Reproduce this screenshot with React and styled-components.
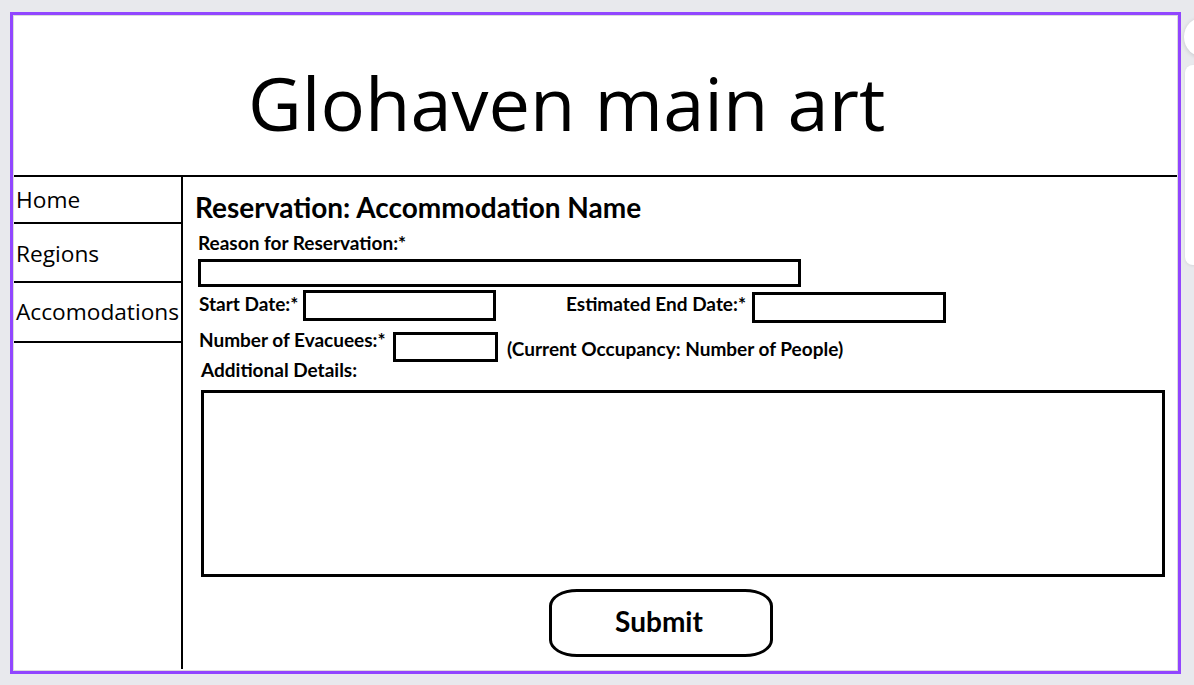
import styled, { createGlobalStyle } from 'styled-components';

const GlobalStyle = createGlobalStyle`
    html, body {
        margin: 0;
        padding: 0;
        background: #e8e9ed;
        overflow: hidden;
    }
    body {
        width: 1194px;
        height: 685px;
        font-family: Lato, "Liberation Sans", sans-serif;
        color: #000;
    }
    * { box-sizing: border-box; }
`

const Page = styled.div`
    display: flex;
    align-items: flex-start;
    width: 1194px;
    height: 685px;
    overflow: hidden;
`

const Frame = styled.div`
    flex: none;
    margin: 12px 0 0 10px;
    width: 1171px;
    height: 662px;
    border: 3px solid #9146ff;
    box-shadow: inset 0 0 0 1px #dcdcdc;
    background: #fff;
    padding: 1px;
    display: flex;
    flex-direction: column;
`

const Header = styled.header`
    height: 161px;
    border-bottom: 2px solid #000;
    padding: 36px 0 0 234px;
`

const Title = styled.h1`
    margin: 0;
    font-family: "Open Sans", "Noto Sans", sans-serif;
    font-weight: 400;
    font-size: 74px;
    line-height: normal;
`

const Body = styled.div`
    flex: 1;
    display: flex;
    min-height: 0;
`

const Sidebar = styled.nav`
    width: 169px;
    border-right: 2px solid #000;
    margin-bottom: 1px;
`

const NavItem = styled.div`
    height: ${p => p.$h}px;
    padding: ${p => p.$pt}px 0 0 2px;
    border-bottom: 2px solid #000;
    font-family: "Open Sans", "Noto Sans", sans-serif;
    font-size: 22.7px;
    font-weight: 400;
    line-height: normal;
    white-space: nowrap;
`

const Main = styled.main`
    flex: 1;
    padding: 13px 0 0 12px;
    display: flex;
    flex-direction: column;
    align-items: flex-start;
`

const Heading = styled.h2`
    margin: 0;
    font-size: 28px;
    font-weight: 700;
    line-height: 34px;
    white-space: nowrap;
`

const Label = styled.label`
    display: block;
    flex: none;
    font-size: 19px;
    font-weight: 700;
    line-height: 22px;
    white-space: nowrap;
    width: ${p => (p.$w ? `${p.$w}px` : 'auto')};
    margin: ${p => p.$m || '0'};
`

const Box = styled.div`
    flex: none;
    width: ${p => p.$w}px;
    height: ${p => p.$h}px;
    border: 3px solid #000;
    background: #fff;
    margin: ${p => p.$m || '0'};
`

const Row = styled.div`
    display: flex;
    align-items: flex-start;
    height: ${p => p.$h}px;
    margin: ${p => p.$m || '0'};
`

const SubmitButton = styled.button`
    margin: 12px 0 0 354px;
    width: 224px;
    height: 68px;
    border: 3px solid #000;
    border-radius: 28px / 17px;
    background: #fff;
    font-family: Lato, "Liberation Sans", sans-serif;
    font-size: 28px;
    font-weight: 700;
    color: #000;
    padding: 0 4px 4px 0;
    cursor: pointer;
`

const Side = styled.div`
    flex: none;
    margin-left: 3px;
    padding-top: 17px;
    display: flex;
    flex-direction: column;
    gap: 8px;
`

const Knob = styled.div`
    width: 40px;
    height: 40px;
    border-radius: 50%;
    background: #fff;
    box-shadow: 0 1px 4px rgba(0, 0, 0, 0.15);
`

const Panel = styled.div`
    width: 40px;
    height: 200px;
    margin-left: 1px;
    border-radius: 8px;
    background: #fff;
    box-shadow: 0 1px 3px rgba(0, 0, 0, 0.08);
`

export default function App() {
    return (
        <>
            <GlobalStyle />
            <Page>
                <Frame>
                    <Header>
                        <Title>Glohaven main art</Title>
                    </Header>
                    <Body>
                        <Sidebar>
                            <NavItem $h={47} $pt={7}>Home</NavItem>
                            <NavItem $h={59} $pt={14}>Regions</NavItem>
                            <NavItem $h={60} $pt={13}>Accomodations</NavItem>
                        </Sidebar>
                        <Main>
                            <Heading>Reservation: Accommodation Name</Heading>
                            <Label $m="8px 0 0 3px">Reason for Reservation:*</Label>
                            <Box $w={603} $h={28} $m="5px 0 0 3px" />
                            <Row $h={38} $m="3px 0 0 4px">
                                <Label $w={104} $m="3px 0 0 0">Start Date:*</Label>
                                <Box $w={193} $h={31} />
                                <Label $w={186} $m="3px 0 0 70px">Estimated End Date:*</Label>
                                <Box $w={194} $h={31} $m="2px 0 0 0" />
                            </Row>
                            <Row $h={30} $m="0 0 0 4px">
                                <Label $w={194} $m="1px 0 0 0">Number of Evacuees:*</Label>
                                <Box $w={105} $h={30} $m="4px 0 0 0" />
                                <Label $m="10px 0 0 9px">(Current Occupancy: Number of People)</Label>
                            </Row>
                            <Label $m="1px 0 0 6px">Additional Details:</Label>
                            <Box $w={964} $h={187} $m="9px 0 0 6px" />
                            <SubmitButton type="button">Submit</SubmitButton>
                        </Main>
                    </Body>
                </Frame>
                <Side>
                    <Knob />
                    <Panel />
                </Side>
            </Page>
        </>
    );
}
